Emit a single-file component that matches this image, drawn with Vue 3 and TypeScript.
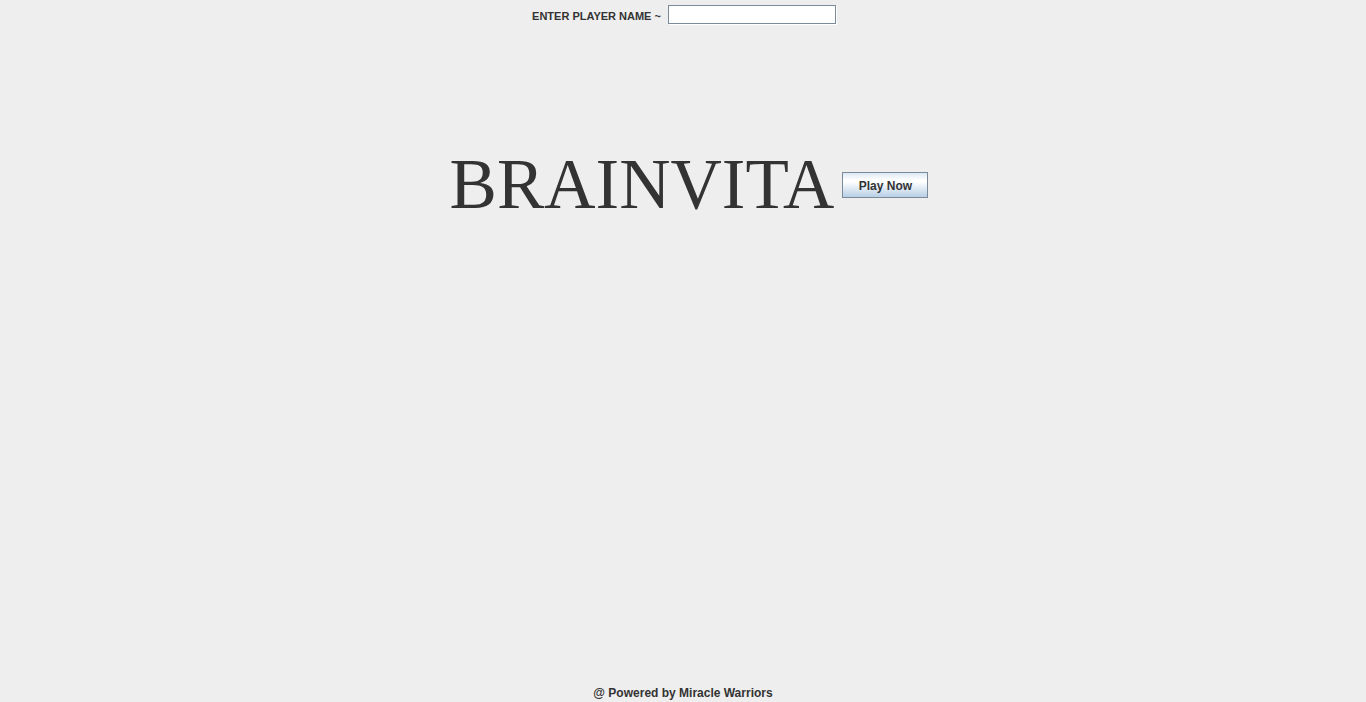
<script setup lang="ts">
import { ref } from 'vue'

const playerName = ref('')
</script>

<template>
  <div class="frame">
    <header class="entry">
      <label for="player">ENTER PLAYER NAME ~</label>
      <input id="player" v-model="playerName" type="text" autocomplete="off" />
    </header>
    <main class="stage">
      <h1>BRAINVITA</h1>
      <button type="button">Play Now</button>
    </main>
    <footer>@ Powered by Miracle Warriors</footer>
  </div>
</template>

<style>
html,
body {
  margin: 0;
  background: #eeeeee;
}
</style>

<style scoped>
.frame {
  box-sizing: border-box;
  min-height: 100vh;
  display: flex;
  flex-direction: column;
  align-items: center;
  background: #eeeeee;
  color: #333333;
  font: bold 12px/16px "Liberation Sans", Arial, sans-serif;
}

.entry {
  display: flex;
  align-items: center;
  gap: 7px;
  padding: 5px 0 0 2px;
}

label {
  padding-top: 2px;
  font-size: 11px;
}

input {
  box-sizing: border-box;
  width: 168px;
  height: 19px;
  padding: 0 2px;
  border: 1px solid #7a8a99;
  border-radius: 0;
  background: #ffffff;
  box-shadow: 1px 1px 0 #ffffff;
  font: 12px/16px "Liberation Sans", Arial, sans-serif;
  outline: none;
}

.stage {
  flex: 1;
  display: flex;
  align-items: flex-start;
  gap: 8px;
  padding: 125px 0 0 12px;
}

h1 {
  margin: 0;
  font: normal 71px/71px "Liberation Serif", "Times New Roman", serif;
}

button {
  width: 86px;
  height: 26px;
  margin-top: 23px;
  padding: 2px 0 0;
  border: 1px solid #7a8a99;
  border-radius: 0;
  background: linear-gradient(#dde8f3 0%, #ffffff 30%, #ffffff 36%, #b8cfe5 100%);
  color: #333333;
  font: bold 12px/16px "Liberation Sans", Arial, sans-serif;
}

footer {
  padding-bottom: 1px;
}
</style>
